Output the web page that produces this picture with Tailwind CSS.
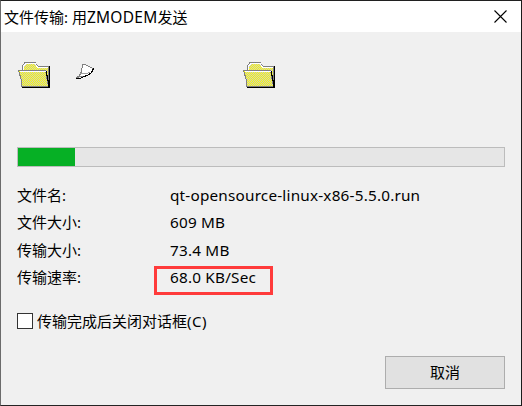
<!DOCTYPE html>
<html lang="zh-CN">
<head>
<meta charset="utf-8">
<title>文件传输</title>
<script src="https://cdn.jsdelivr.net/npm/@tailwindcss/browser@4"></script>
</head>
<body class="w-[522px] h-[406px] overflow-hidden bg-[#1b1b1b]">
<main class="w-full h-full flex flex-col bg-[#f0f0f0] border border-l-[#6b6b6b] border-t-[#202020] border-r-[#1b1b1b] border-b-[#242424] text-[15px] text-black font-['Noto_Sans','Noto_Sans_CJK_SC',sans-serif]">
  <header class="h-[31px] shrink-0 bg-white flex items-center justify-between pl-[3px] pr-[14px]">
    <h1 class="leading-[30px] whitespace-nowrap">文件传输: 用<span class="text-[15.5px] tracking-[0.25px]">ZMODEM</span>发送</h1>
    <svg class="w-[13px] h-[13px]" viewBox="0 0 13 13" fill="none" stroke="#000" stroke-width="1.1"><path d="M.5.5l12 12M12.5.5l-12 12"/></svg>
  </header>
  <section class="h-[115px] shrink-0 pt-[29px] pl-[17px] flex items-start">
    <svg class="w-[33px] h-[28px] shrink-0" viewBox="0 0 33 28" shape-rendering="crispEdges">
      <defs>
        <pattern id="front" width="2" height="2" patternUnits="userSpaceOnUse"><path fill="#ff0" d="M0 0h2v2H0z"/><path fill="#c8c8c8" d="M0 0h1v1H0zM1 1h1v1H1z"/></pattern>
        <pattern id="back" width="2" height="2" patternUnits="userSpaceOnUse"><path fill="#c8c8c8" d="M0 0h2v2H0z"/><path fill="#ff0" d="M0 0h1v1H0zM1 1h1v1H1z"/></pattern>
        <g id="folder">
          <path d="M5 27h27V5h-2v18H5z" fill="#000"/>
          <path d="M4.500 10V4.500l3-3.500h9l3 4h11v20l-3-15z" fill="url(#back)" stroke="#808080"/>
          <path d="M5.500 9V5l3-3h8l3 4h10" fill="none" stroke="#fff"/>
          <path d="M.5 9.500h27l3 16H3.500v-6z" fill="url(#front)" stroke="#808080"/>
          <path d="M1.500 10.500h26" stroke="#fff"/>
          <path d="M28.500 10v4h1v5h1v7M4 26.500h27" fill="none" stroke="#000"/>
        </g>
      </defs>
      <use href="#folder"/>
    </svg>
    <svg class="w-[19px] h-[16px] shrink-0 ml-[24px] mt-[2px]" viewBox="0 0 19 16" shape-rendering="crispEdges">
      <path d="M7.500 1.500h3l3 2 5 2-2 4-4 3-5 1-6 1 3-2 2-4z" fill="#fff" stroke="#808080"/>
      <path d="M18.500 5.500l-2 4-4 3-4 1-3 2H.5" fill="none" stroke="#000"/>
      <path d="M5 10.500h6l4-1" fill="none" stroke="#a0a0a0"/>
    </svg>
    <svg class="w-[33px] h-[28px] shrink-0 ml-[149px]" viewBox="0 0 33 28" shape-rendering="crispEdges"><use href="#folder"/></svg>
  </section>
  <div class="ml-4 w-[488px] h-5 shrink-0 bg-[#e6e6e6] border border-[#bcbcbc]"><div class="h-full w-[57px] bg-[#06b025]"></div></div>
  <dl class="ml-4 mt-[14px] grid grid-cols-[153px_auto] grid-rows-[27px_28px_27px_27px] leading-[28px] whitespace-nowrap">
    <dt>文件名:</dt><dd class="text-[15.3px] tracking-[0.2px]">qt-opensource-linux-x86-5.5.0.run</dd>
    <dt>文件大小:</dt><dd class="text-[15.3px] tracking-[0.2px]">609 MB</dd>
    <dt>传输大小:</dt><dd class="text-[15.3px] tracking-[0.2px]">73.4 MB</dd>
    <dt>传输速率:</dt><dd class="relative text-[15.3px] tracking-[0.2px]">68.0 KB/Sec<span class="absolute -left-4 top-[3px] w-[119px] h-[29px] border-[3px] border-[#ff3b3b]"></span></dd>
  </dl>
  <label class="ml-4 mt-[17px] h-[28px] flex items-center gap-[4px] whitespace-nowrap"><span class="w-4 h-4 bg-white border border-[#333]"></span><span>传输完成后关闭对话框<span class="tracking-[0.5px]">(C)</span></span></label>
  <button class="ml-[384px] mt-[21px] w-[120px] h-[33px] shrink-0 border border-[#adadad] bg-[#e1e1e1] flex items-center justify-center">取消</button>
</main>
</body>
</html>
